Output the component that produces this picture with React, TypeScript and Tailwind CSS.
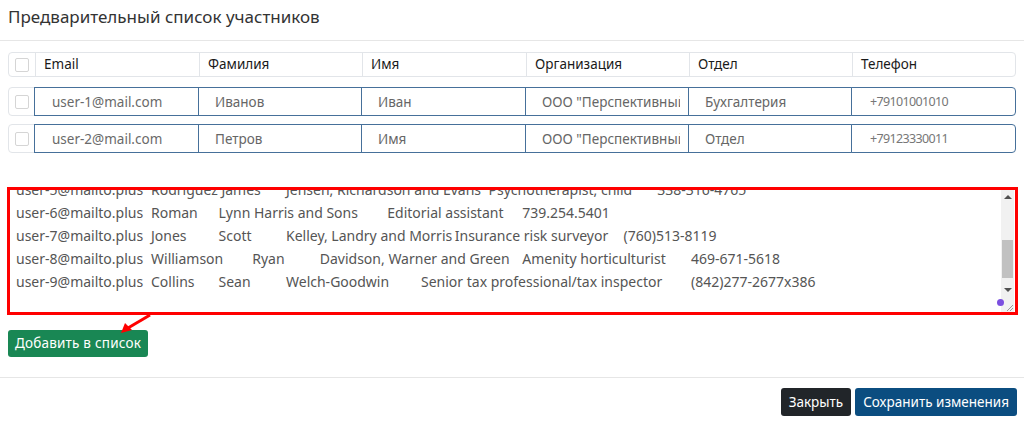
import { useEffect, useRef } from "react";

const cols = "grid-cols-[27px_164px_163px_164px_163px_163px_164px]";

const headers = ["Email", "Фамилия", "Имя", "Организация", "Отдел", "Телефон"];

const rows = [
  ["user-1@mail.com", "Иванов", "Иван", 'ООО "Перспективный проект"', "Бухгалтерия", "+79101001010"],
  ["user-2@mail.com", "Петров", "Имя", 'ООО "Перспективный проект"', "Отдел", "+79123330011"],
];

const pasted = [
  "user-1@mailto.plus\tSmith\tJohn\tBrown and Sons\tAccountant\t555-201-3344",
  "user-2@mailto.plus\tTaylor\tMary\tMiller Group\tLawyer\t555-820-1190",
  "user-3@mailto.plus\tWhite\tAnna\tHill Ltd\tDesigner\t555-310-7721",
  "user-4@mailto.plus\tClark\tPeter\tYoung Inc\tEngineer\t555-412-0098",
  "user-5@mailto.plus\tRodriguez James\tJensen, Richardson and Evans\tPsychotherapist, child\t338-316-4765",
  "user-6@mailto.plus\tRoman\tLynn Harris and Sons\tEditorial assistant\t739.254.5401",
  "user-7@mailto.plus\tJones\tScott\tKelley, Landry and Morris\tInsurance risk surveyor\t(760)513-8119",
  "user-8@mailto.plus\tWilliamson\tRyan\tDavidson, Warner and Green\tAmenity horticulturist\t469-671-5618",
  "user-9@mailto.plus\tCollins\tSean\tWelch-Goodwin\tSenior tax professional/tax inspector\t(842)277-2677x386",
  "",
].join("\n");

function Checkbox() {
  return <span className="block w-[14px] h-[14px] rounded-[2px] border border-[#d5d5d5] bg-white" />;
}

export default function App() {
  const area = useRef<HTMLTextAreaElement>(null);

  useEffect(() => {
    if (area.current) area.current.scrollTop = 110;
  }, []);

  return (
    <div className="w-[1024px] h-[423px] bg-white font-['Noto_Sans',sans-serif] text-[#212529] overflow-hidden">
      <div className="h-[41px] border-b border-[#e6e6e6] px-2 pt-[5px]">
        <h1 className="text-[17px] leading-[24px] text-[#333]">Предварительный список участников</h1>
      </div>

      <div className="mx-2 mt-[11px]">
        <div className={`grid ${cols} h-[25px] border border-[#e2e5e9] rounded-[4px] text-[13.5px] text-[#1a1a1a]`}>
          <div className="flex items-center justify-center border-r border-[#e2e5e9]">
            <Checkbox />
          </div>
          {headers.map((h, i) => (
            <div
              key={h}
              className={`flex items-center px-2 ${i < headers.length - 1 ? "border-r border-[#e2e5e9]" : ""}`}
            >
              {h}
            </div>
          ))}
        </div>

        {rows.map((r, ri) => (
          <div key={ri} className={`grid ${cols} h-[29px] ${ri === 0 ? "mt-[10px]" : "mt-[8px]"}`}>
            <div className="flex items-center justify-center border border-[#e2e5e9] rounded-l-[4px]">
              <Checkbox />
            </div>
            {r.map((v, i) => (
              <input
                key={i}
                readOnly
                value={v}
                className={`min-w-0 h-full border border-[#46709a] -ml-px pr-2 outline-none bg-white ${
                  i === r.length - 1
                    ? "rounded-r-[4px] text-[12.5px] tracking-[-0.65px] pl-[18px] text-[#777]"
                    : i === 0
                      ? "text-[13.5px] pl-[17px] text-[#6a6a6a]"
                      : "text-[13.5px] pl-[16px] text-[#666]"
                }`}
              />
            ))}
          </div>
        ))}
      </div>

      <div className="relative mt-[34px] ml-[7px] mr-[6px] h-[128px] border-[3px] border-[#ff0000] flex bg-white">
        <textarea
          ref={area}
          readOnly
          defaultValue={pasted}
          className="flex-1 h-full resize-none overflow-hidden outline-none pl-[6px] pt-[6px] pb-[6px] text-[14px] leading-[23px] text-[#555] whitespace-pre [tab-size:33.75px]"
        />
        <div className="w-[13px] mr-[1px] flex flex-col bg-[#f1f1f1]">
          <div className="h-[14px] flex items-center justify-center">
            <span className="w-0 h-0 border-l-[4px] border-r-[4px] border-b-[4px] border-l-transparent border-r-transparent border-b-[#505050]" />
          </div>
          <div className="h-[36px]" />
          <div className="h-[38px] mx-[1px] bg-[#c1c1c1]" />
          <div className="h-[5px]" />
          <div className="h-[14px] flex items-center justify-center">
            <span className="w-0 h-0 border-l-[4px] border-r-[4px] border-t-[4px] border-l-transparent border-r-transparent border-t-[#505050]" />
          </div>
          <div className="flex-1 relative">
            <svg className="absolute right-0 bottom-0" width="9" height="9" viewBox="0 0 9 9">
              <path d="M8 2 L2 8 M8 5 L5 8" stroke="#9a9a9a" strokeWidth="1" />
            </svg>
          </div>
        </div>
        <span className="absolute right-[11px] bottom-[6px] w-[7px] h-[7px] rounded-full bg-[#7b4fe0]" />
      </div>

      <div className="relative">
        <svg className="absolute left-[112px] -top-[2px] pointer-events-none" width="44" height="24" viewBox="0 0 44 24">
          <line x1="38" y1="2" x2="16" y2="15" stroke="#ff0000" strokeWidth="3" />
          <path d="M9 20 L13 10 L20 17 Z" fill="#ff0000" />
        </svg>
      </div>

      <div className="px-2 mt-[15px]">
        <button className="h-[27px] px-[7px] rounded-[3px] bg-[#198754] text-white text-[13.5px] tracking-[0.2px]">
          Добавить в список
        </button>
      </div>

      <div className="mt-[20px] border-t border-[#e6e6e6] pt-[10px] pr-[7px] flex justify-end gap-[4px]">
        <button className="h-[28px] px-[8px] rounded-[3px] bg-[#212529] text-white text-[13.5px]">Закрыть</button>
        <button className="h-[28px] px-[8px] rounded-[3px] bg-[#0b4d80] text-white text-[13.5px]">
          Сохранить изменения
        </button>
      </div>
    </div>
  );
}
